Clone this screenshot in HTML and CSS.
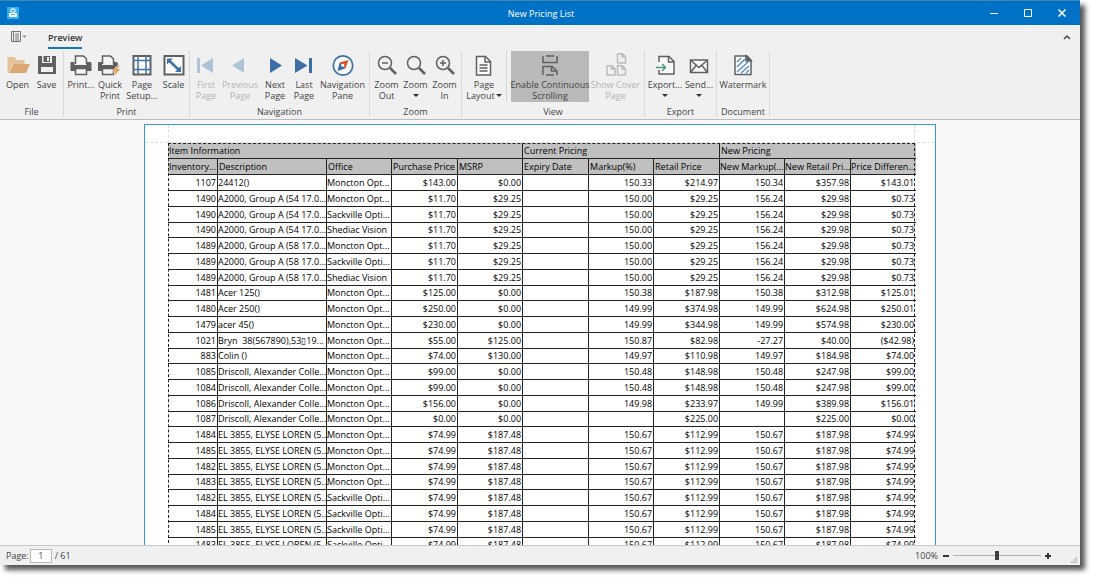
FILE: index.html
```html
<!DOCTYPE html>
<html lang="en">
<head>
<meta charset="utf-8">
<title>New Pricing List</title>
<link rel="stylesheet" href="styles.css">
</head>
<body>
<div class="window">
  <header class="titlebar">
    <svg class="app-icon" viewBox="0 0 12 12"><rect width="12" height="12" fill="#35b0ee"/><path d="M4 2h4v3H4z" fill="none" stroke="#fff"/><path d="M2 6h8v4H2z" fill="#fff"/><path d="M4 7.500h4" stroke="#35b0ee"/></svg>
    <h1 class="title">New Pricing List</h1>
    <div class="window-buttons">
      <button aria-label="Minimize"><svg viewBox="0 0 10 10"><path d="M1 5.500h8"/></svg></button>
      <button aria-label="Maximize"><svg viewBox="0 0 10 10"><path d="M1.500 1.500h7v7h-7z"/></svg></button>
      <button aria-label="Close"><svg viewBox="0 0 10 10"><path d="M1.500 1.500l7 7M8.500 1.500l-7 7" stroke-width="1.500"/></svg></button>
    </div>
  </header>

  <nav class="tabs">
    <button class="file-menu" aria-label="Menu"><svg viewBox="0 0 16 12"><path d="M.5.5h9v10h-9zM2.500.5v10M4 3h4M4 5h4M4 7h4M4 9h4" fill="none" stroke="#777"/><path d="M11 4.500h5l-2.500 2.500z" fill="#999"/></svg></button>
    <button class="tab">Preview</button>
    <button class="collapse" aria-label="Collapse ribbon"><svg viewBox="0 0 8 6"><path d="M1 5l3-3 3 3" fill="none" stroke="#444" stroke-width="1.500"/></svg></button>
  </nav>

  <div class="ribbon">
    <section class="group">
      <div class="tools file">
        <button class="tool"><svg viewBox="0 0 24 24"><path d="M1.500 19V4h7l2 3h8v4H7L2.500 20z" fill="#e6c29b"/><path d="M7.500 11H24l-4 9H3z" fill="#d9a874"/></svg><span>Open</span></button>
        <button class="tool"><svg viewBox="0 0 24 24"><path d="M3 3h18v18H3z" fill="#606060"/><path d="M7 3h10v7H7zM6 14h12v5H6z" fill="#f0f0f0"/><path d="M8.500 3H15v6H8.500z" fill="#606060"/><path d="M12 4h2v4h-2z" fill="#f0f0f0"/></svg><span>Save</span></button>
      </div>
      <h2>File</h2>
    </section>
    <section class="group">
      <div class="tools print">
        <button class="tool"><svg viewBox="0 0 24 24"><path d="M1.500 9h4v3h12V9h4q1 0 1 2v7h-21z" fill="#606060"/><path d="M6.500 11V3h8l3 3v5M6.500 15.500h11v6h-11z" fill="#f5f5f5" stroke="#606060" stroke-width="1.500"/></svg><span>Print...</span></button>
        <button class="tool"><svg viewBox="0 0 24 24"><path d="M0 9h4v3h11V9h3q2 0 2 2v7H0z" fill="#606060"/><path d="M4.500 11V3h8l3 3v5M4.500 15.500h11v6h-11z" fill="#f5f5f5" stroke="#606060" stroke-width="1.500"/><path d="M20 12l-7 7h4l-2 5 8-8h-4l3-4z" fill="#dda663" stroke="#f0f0f0" stroke-width=".5"/></svg><span>Quick<br>Print</span></button>
        <button class="tool"><svg viewBox="0 0 24 24"><path d="M3.500 3h17v18.500h-17z" fill="#fff" stroke="#606060" stroke-width="2"/><path d="M8 3v18M16 3v18M3 7.500h18M3 16.500h18" stroke="#3f70a8" stroke-width="1.500"/></svg><span>Page<br>Setup...</span></button>
        <button class="tool"><svg viewBox="0 0 24 24"><path d="M2.500 3h19v18.500h-19z" fill="#fff" stroke="#606060" stroke-width="2"/><path d="M7 7.500l10 9.500" stroke="#3f70a8" stroke-width="2.500"/><path d="M5 5.500h6l-6 6zM19 19v-6l-6 6z" fill="#3f70a8"/></svg><span>Scale</span></button>
      </div>
      <h2>Print</h2>
    </section>
    <section class="group">
      <div class="tools navigation">
        <button class="tool" disabled><svg viewBox="0 0 24 24"><path d="M3 5h3v15H3zM19 5v15L7 12.500z" fill="#adc3d8"/></svg><span>First<br>Page</span></button>
        <button class="tool" disabled><svg viewBox="0 0 24 24"><path d="M16 5v15L4 12.500z" fill="#adc3d8"/></svg><span>Previous<br>Page</span></button>
        <button class="tool"><svg viewBox="0 0 24 24"><path d="M7 5v15l12-7.500z" fill="#3d6fa6"/></svg><span>Next<br>Page</span></button>
        <button class="tool"><svg viewBox="0 0 24 24"><path d="M3 5v15l12.500-7.500zM17 5h3v15h-3z" fill="#3d6fa6"/></svg><span>Last<br>Page</span></button>
        <button class="tool"><svg viewBox="0 0 24 24"><circle cx="12" cy="12.500" r="9.700" fill="#fff" stroke="#3d6fa6" stroke-width="1.700"/><path d="M17.500 7l-3 8.500-6-6z" fill="#d9532c"/><path d="M8.500 9.500l6 6L6.500 18z" fill="#3d6fa6"/><circle cx="11.800" cy="12.300" r="1.500" fill="#fff"/></svg><span>Navigation<br>Pane</span></button>
      </div>
      <h2>Navigation</h2>
    </section>
    <section class="group">
      <div class="tools zoom">
        <button class="tool"><svg viewBox="0 0 24 24" class="line"><circle cx="10" cy="10" r="6.500"/><path d="M7 10h6"/><path d="M15 15l6 6" stroke-width="2.500"/></svg><span>Zoom<br>Out</span></button>
        <button class="tool"><svg viewBox="0 0 24 24" class="line"><circle cx="10" cy="10" r="6.500"/><path d="M15 15l6 6" stroke-width="2.500"/></svg><span>Zoom</span><span class="arrow"></span></button>
        <button class="tool"><svg viewBox="0 0 24 24" class="line"><circle cx="10" cy="10" r="6.500"/><path d="M7 10h6M10 7v6"/><path d="M15 15l6 6" stroke-width="2.500"/></svg><span>Zoom<br>In</span></button>
      </div>
      <h2>Zoom</h2>
    </section>
    <section class="group">
      <div class="tools view">
        <button class="tool"><svg viewBox="0 0 24 24" class="line"><path d="M4.500 3.500h9l5 5V22h-14z" fill="#fff"/><path d="M13 3.500V9h5.500M7.500 12h8M7.500 15h8M7.500 18h8"/></svg><span>Page<br>Layout<i class="arrow inline"></i></span></button>
        <i class="divider"></i>
        <button class="tool pressed" aria-pressed="true"><svg viewBox="0 0 24 24" class="line"><path d="M5 3v6.500h14V3M8 3h8M5 22v-8.500h9l5 4.500v4M13.500 14v4H19M8 22h8"/></svg><span>Enable Continuous<br>Scrolling</span></button>
        <button class="tool" disabled><svg viewBox="0 0 24 24" class="line faint"><path d="M13.500.8h5l3 3V10h-8zM18 1v3h3.500M3 12.800h5l3 3V22H3zM7.500 13v3H11M13.500 12.800h5l3 3V22h-8zM18 13v3h3.500"/></svg><span>Show Cover<br>Page</span></button>
      </div>
      <h2>View</h2>
    </section>
    <section class="group">
      <div class="tools export">
        <button class="tool"><svg viewBox="0 0 24 24" class="line"><path d="M6 9V3.500h10l5 5V21H6v-4" fill="#f8f8f8"/><path d="M15.500 3.500V9H21"/><path d="M3 14.500h9M9 11l3.500 3.500L9 18" stroke="#4a9a7c"/></svg><span>Export...</span><span class="arrow"></span></button>
        <button class="tool"><svg viewBox="0 0 24 24" class="line"><path d="M3.500 7h17v12.500h-17z" fill="#f8f8f8"/><path d="M4 7.500l8 7 8-7M4 19l5-6.500M20 19l-5-6.500"/></svg><span>Send...</span><span class="arrow"></span></button>
      </div>
      <h2>Export</h2>
    </section>
    <section class="group">
      <div class="tools document">
        <button class="tool"><svg viewBox="0 0 24 24" class="line"><path d="M4 3h12l4 4v14.500H4z" fill="#fff"/><path d="M15 3v5h5z" fill="#606060"/><path d="M6 9l4-4M6 14l8-8M6 19l12-11M10 20l8-7M15 20l3-3" stroke="#5b8fcb"/></svg><span>Watermark</span></button>
      </div>
      <h2>Document</h2>
    </section>
  </div>

  <main class="viewer">
    <div class="sheet">
      <div class="report">
      <table>
        <colgroup><col class="c50"><col class="c109"><col class="c65"><col class="c66"><col class="c65"><col class="c66"><col class="c65"><col class="c66"><col class="c65"><col class="c66"><col class="c65"></colgroup>
        <thead>
          <tr><th colspan="5">Item Information</th><th colspan="3">Current Pricing</th><th colspan="3">New Pricing</th></tr>
          <tr><th>Inventory...</th><th>Description</th><th>Office</th><th>Purchase Price</th><th>MSRP</th><th>Expiry Date</th><th>Markup(%)</th><th>Retail Price</th><th>New Markup(...</th><th>New Retail Pri...</th><th>Price Differen...</th></tr>
        </thead>
        <tbody>
          <tr><td>1107</td><td>24412()</td><td>Moncton Opt...</td><td>$143.00</td><td>$0.00</td><td></td><td>150.33</td><td>$214.97</td><td>150.34</td><td>$357.98</td><td>$143.01</td></tr>
          <tr><td>1490</td><td>A2000, Group A (54 17.0...</td><td>Moncton Opt...</td><td>$11.70</td><td>$29.25</td><td></td><td>150.00</td><td>$29.25</td><td>156.24</td><td>$29.98</td><td>$0.73</td></tr>
          <tr><td>1490</td><td>A2000, Group A (54 17.0...</td><td>Sackville Opti...</td><td>$11.70</td><td>$29.25</td><td></td><td>150.00</td><td>$29.25</td><td>156.24</td><td>$29.98</td><td>$0.73</td></tr>
          <tr><td>1490</td><td>A2000, Group A (54 17.0...</td><td>Shediac Vision</td><td>$11.70</td><td>$29.25</td><td></td><td>150.00</td><td>$29.25</td><td>156.24</td><td>$29.98</td><td>$0.73</td></tr>
          <tr><td>1489</td><td>A2000, Group A (58 17.0...</td><td>Moncton Opt...</td><td>$11.70</td><td>$29.25</td><td></td><td>150.00</td><td>$29.25</td><td>156.24</td><td>$29.98</td><td>$0.73</td></tr>
          <tr><td>1489</td><td>A2000, Group A (58 17.0...</td><td>Sackville Opti...</td><td>$11.70</td><td>$29.25</td><td></td><td>150.00</td><td>$29.25</td><td>156.24</td><td>$29.98</td><td>$0.73</td></tr>
          <tr><td>1489</td><td>A2000, Group A (58 17.0...</td><td>Shediac Vision</td><td>$11.70</td><td>$29.25</td><td></td><td>150.00</td><td>$29.25</td><td>156.24</td><td>$29.98</td><td>$0.73</td></tr>
          <tr><td>1481</td><td>Acer 125()</td><td>Moncton Opt...</td><td>$125.00</td><td>$0.00</td><td></td><td>150.38</td><td>$187.98</td><td>150.38</td><td>$312.98</td><td>$125.01</td></tr>
          <tr><td>1480</td><td>Acer 250()</td><td>Moncton Opt...</td><td>$250.00</td><td>$0.00</td><td></td><td>149.99</td><td>$374.98</td><td>149.99</td><td>$624.98</td><td>$250.01</td></tr>
          <tr><td>1479</td><td>acer 45()</td><td>Moncton Opt...</td><td>$230.00</td><td>$0.00</td><td></td><td>149.99</td><td>$344.98</td><td>149.99</td><td>$574.98</td><td>$230.00</td></tr>
          <tr><td>1021</td><td>Bryn&nbsp; 38(567890),53▯19...</td><td>Moncton Opt...</td><td>$55.00</td><td>$125.00</td><td></td><td>150.87</td><td>$82.98</td><td>-27.27</td><td>$40.00</td><td>($42.98)</td></tr>
          <tr><td>883</td><td>Colin ()</td><td>Moncton Opt...</td><td>$74.00</td><td>$130.00</td><td></td><td>149.97</td><td>$110.98</td><td>149.97</td><td>$184.98</td><td>$74.00</td></tr>
          <tr><td>1085</td><td>Driscoll, Alexander Colle...</td><td>Moncton Opt...</td><td>$99.00</td><td>$0.00</td><td></td><td>150.48</td><td>$148.98</td><td>150.48</td><td>$247.98</td><td>$99.00</td></tr>
          <tr><td>1084</td><td>Driscoll, Alexander Colle...</td><td>Moncton Opt...</td><td>$99.00</td><td>$0.00</td><td></td><td>150.48</td><td>$148.98</td><td>150.48</td><td>$247.98</td><td>$99.00</td></tr>
          <tr><td>1086</td><td>Driscoll, Alexander Colle...</td><td>Moncton Opt...</td><td>$156.00</td><td>$0.00</td><td></td><td>149.98</td><td>$233.97</td><td>149.99</td><td>$389.98</td><td>$156.01</td></tr>
          <tr><td>1087</td><td>Driscoll, Alexander Colle...</td><td>Moncton Opt...</td><td>$0.00</td><td>$0.00</td><td></td><td></td><td>$225.00</td><td></td><td>$225.00</td><td>$0.00</td></tr>
          <tr><td>1484</td><td>EL 3855, ELYSE LOREN (5...</td><td>Moncton Opt...</td><td>$74.99</td><td>$187.48</td><td></td><td>150.67</td><td>$112.99</td><td>150.67</td><td>$187.98</td><td>$74.99</td></tr>
          <tr><td>1485</td><td>EL 3855, ELYSE LOREN (5...</td><td>Moncton Opt...</td><td>$74.99</td><td>$187.48</td><td></td><td>150.67</td><td>$112.99</td><td>150.67</td><td>$187.98</td><td>$74.99</td></tr>
          <tr><td>1482</td><td>EL 3855, ELYSE LOREN (5...</td><td>Moncton Opt...</td><td>$74.99</td><td>$187.48</td><td></td><td>150.67</td><td>$112.99</td><td>150.67</td><td>$187.98</td><td>$74.99</td></tr>
          <tr><td>1483</td><td>EL 3855, ELYSE LOREN (5...</td><td>Moncton Opt...</td><td>$74.99</td><td>$187.48</td><td></td><td>150.67</td><td>$112.99</td><td>150.67</td><td>$187.98</td><td>$74.99</td></tr>
          <tr><td>1482</td><td>EL 3855, ELYSE LOREN (5...</td><td>Sackville Opti...</td><td>$74.99</td><td>$187.48</td><td></td><td>150.67</td><td>$112.99</td><td>150.67</td><td>$187.98</td><td>$74.99</td></tr>
          <tr><td>1484</td><td>EL 3855, ELYSE LOREN (5...</td><td>Sackville Opti...</td><td>$74.99</td><td>$187.48</td><td></td><td>150.67</td><td>$112.99</td><td>150.67</td><td>$187.98</td><td>$74.99</td></tr>
          <tr><td>1485</td><td>EL 3855, ELYSE LOREN (5...</td><td>Sackville Opti...</td><td>$74.99</td><td>$187.48</td><td></td><td>150.67</td><td>$112.99</td><td>150.67</td><td>$187.98</td><td>$74.99</td></tr>
          <tr><td>1483</td><td>EL 3855, ELYSE LOREN (5...</td><td>Sackville Opti...</td><td>$74.99</td><td>$187.48</td><td></td><td>150.67</td><td>$112.99</td><td>150.67</td><td>$187.98</td><td>$74.99</td></tr>
        </tbody>
      </table>
      </div>
    </div>
  </main>

  <footer class="status">
    <label for="page">Page:</label><input id="page" type="text" value="1"><span>/ 61</span>
    <label class="zoom-label" for="zoom">100%</label>
    <button class="step" aria-label="Zoom out"><svg viewBox="0 0 8 8"><path d="M1 4h6"/></svg></button>
    <input id="zoom" type="range" min="0" max="100" value="50">
    <button class="step" aria-label="Zoom in"><svg viewBox="0 0 8 8"><path d="M1 4h6M4 1v6"/></svg></button>
    <svg class="grip" viewBox="0 0 8 8"><path d="M6 0h2v2H6zM3 3h2v2H3zM6 3h2v2H6zM0 6h2v2H0zM3 6h2v2H3zM6 6h2v2H6z" fill="#b0b0b0"/></svg>
  </footer>
</div>
</body>
</html>
```
FILE: styles.css
```css
* { box-sizing: border-box; }
body {
  margin: 0;
  height: 100vh;
  padding: 0 15px 15px 0;
  background: #fff;
  color: #444;
  font: 9px/11px "Open Sans", "Noto Sans", sans-serif;
  overflow: hidden;
}
button { border: 0; padding: 0; background: none; color: inherit; font: inherit; }
h1, h2 { margin: 0; font: inherit; }
svg { display: block; flex: none; }

.window {
  display: flex;
  flex-direction: column;
  height: 100%;
  background: #f0f0f0;
  box-shadow: 5px 5px 5px #555;
}

.titlebar {
  display: flex;
  align-items: center;
  height: 25px;
  padding: 0 8px 0 7px;
  border-top: 1px solid #4585b5;
  background: #0072c6;
  color: #fff;
}
.app-icon { width: 12px; height: 12px; }
.title { flex: 1; padding-left: 79px; text-align: center; }
.window-buttons { display: flex; gap: 14px; }
.window-buttons button { display: grid; place-items: center; width: 20px; height: 20px; }
.window-buttons svg { width: 10px; height: 10px; fill: none; stroke: #fff; }

.tabs { display: flex; align-items: center; height: 24px; padding: 0 9px 0 11px; }
.file-menu svg { width: 16px; height: 12px; }
.tab {
  height: 21px;
  margin-left: 21px;
  align-self: end;
  border-bottom: 2px solid #1177cc;
  color: #333;
  font-weight: 600;
}
.collapse { margin-left: auto; }
.collapse svg { width: 8px; height: 6px; }

.ribbon { display: flex; height: 71px; border-bottom: 1px solid #bcbcbc; }
.group {
  display: flex;
  flex-direction: column;
  height: 66px;
  margin-top: 2px;
  border-right: 1px solid #d9d9d9;
}
.group h2 { margin-top: 4px; text-align: center; }
.tools { display: grid; height: 51px; }
.tools.file { grid-template-columns: 29px 29px; padding: 0 2px 0 3px; }
.tools.print { grid-template-columns: 30px 28px 36px 27px; padding: 0 2px; }
.tools.navigation { grid-template-columns: 28px 40px 30px 28px 49px; padding: 0 2px; }
.tools.zoom { grid-template-columns: 29px 29px 29px; padding: 0 2px; }
.tools.view { grid-template-columns: 42px 6px 78px 53px; padding: 0 2px 0 1px; }
.tools.export { grid-template-columns: 34px 34px; padding: 0 0 0 3px; }
.tools.document { grid-template-columns: 50px; padding: 0 1px; }
.tool {
  display: flex;
  flex-direction: column;
  align-items: center;
  padding-top: 2px;
  line-height: 11px;
  text-align: center;
  white-space: nowrap;
}
.tool svg { width: 24px; height: 24px; margin-bottom: 2px; }
.tool:disabled { color: #b4b4b4; }
.pressed { background: #b9b9b9; }
.divider { width: 1px; margin-left: 1px; background: #d9d9d9; }
.line { fill: none; stroke: #606060; stroke-width: 1.5px; }
.faint { stroke: #bdbdbd; }
.arrow {
  margin-top: 4px;
  border: 3px solid transparent;
  border-top-color: #333;
  border-bottom: 0;
}
.arrow.inline { display: inline-block; margin: 0 0 2px 1px; }

.viewer { flex: 1; min-height: 0; padding-top: 4px; overflow: hidden; background: #f8f8f8; }
.sheet {
  position: relative;
  width: 792px;
  max-width: 100%;
  min-height: 100%;
  margin: 0 auto;
  padding: 18px 20px 0 23px;
  border: 1px solid #3a96dd;
  background: #fff;
}
.sheet::before, .sheet::after { content: ""; position: absolute; pointer-events: none; }
.sheet::before { left: 0; right: 0; top: 17px; border-top: 1px dashed #ddd; }
.sheet::after { left: 23px; right: 20px; top: 0; height: 18px; border: 1px dashed #ddd; border-width: 0 1px; }
.report { position: relative; }
.report::after { content: ""; position: absolute; inset: 0; border: 1px dashed #222; pointer-events: none; }

table {
  width: 100%;
  table-layout: fixed;
  border-spacing: 0;
  color: #000;
}
.c50 { width: 50px; }
.c65 { width: 65px; }
.c66 { width: 66px; }
.c109 { width: 109px; }
th, td {
  height: 16px;
  padding: 0 1px;
  border: 0 solid #222;
  border-width: 0 1px 1px 0;
  line-height: 14px;
  font-weight: 400;
  text-align: right;
  white-space: nowrap;
}
th:last-child, td:last-child { padding-right: 2px; border-right: 0; }
th { background: #c0c0c0; text-align: left; }
td:nth-child(2), td:nth-child(3) { padding: 0; text-align: left; }
th:nth-child(n+9) { padding: 0; }
tbody tr:nth-child(4n) td { height: 15px; }

.status {
  display: flex;
  align-items: center;
  height: 20px;
  padding: 0 3px 0 6px;
  border-top: 1px solid #c8c8c8;
}
#page {
  width: 22px;
  height: 14px;
  margin: 0 3px 0 1px;
  padding: 0;
  border: 1px solid #b8b8b8;
  background: #fff;
  color: #444;
  font: inherit;
  text-align: center;
}
.zoom-label { margin: 0 1px 0 auto; }
.step { margin: 0 3px; }
.step svg { width: 8px; height: 8px; stroke: #333; stroke-width: 2px; }
#zoom {
  appearance: none;
  width: 88px;
  height: 10px;
  margin: 0;
  background: linear-gradient(#b0b0b0, #b0b0b0) center / 100% 1px no-repeat;
}
#zoom::-webkit-slider-thumb { appearance: none; width: 4px; height: 9px; background: #404040; }
.grip { width: 6px; height: 6px; margin: 8px 0 0 16px; }
```
